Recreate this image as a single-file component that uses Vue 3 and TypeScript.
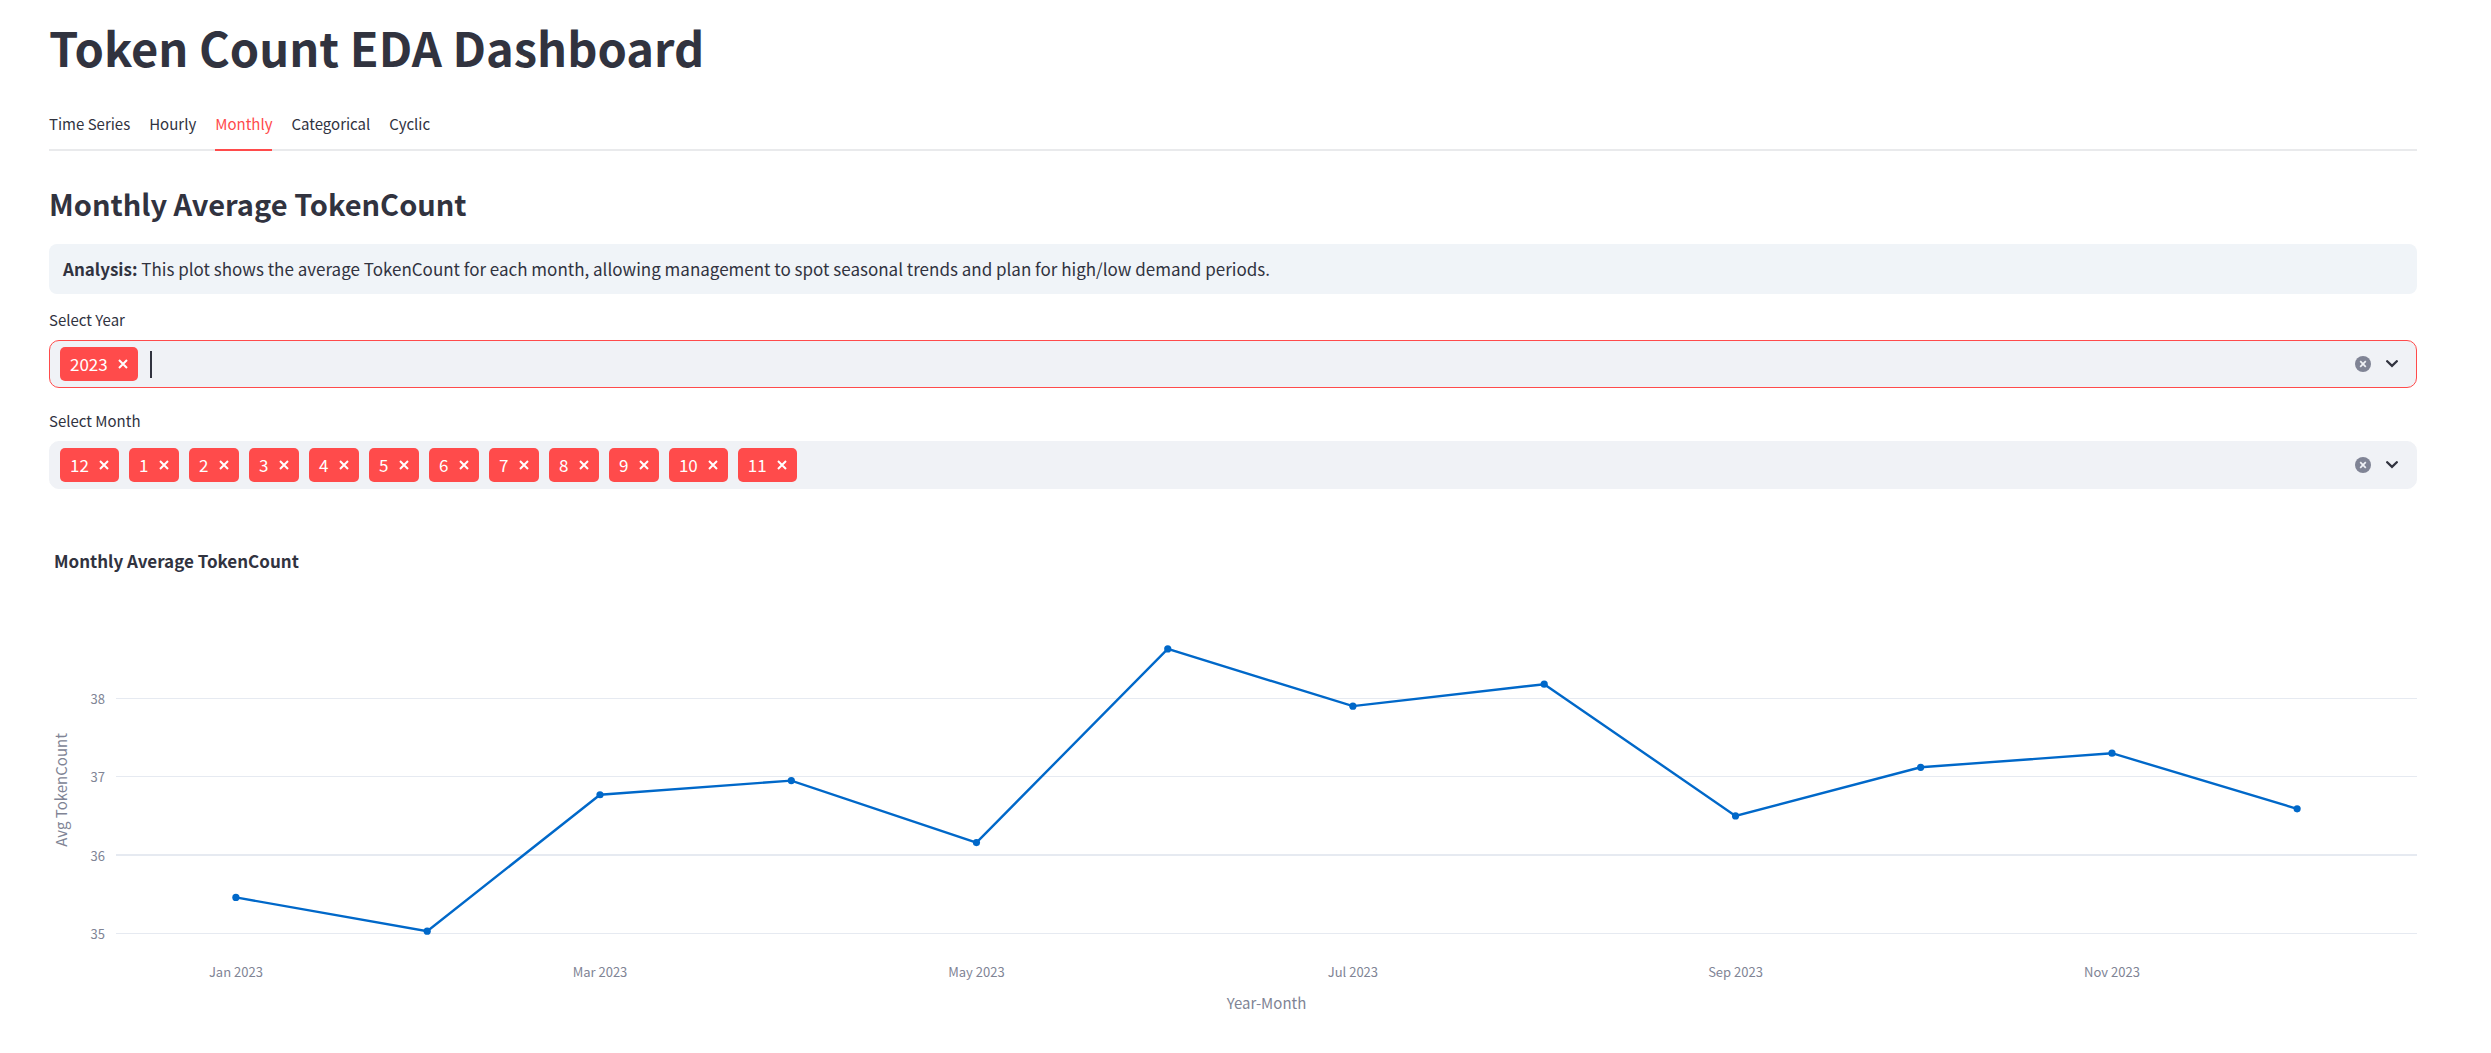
<script setup lang="ts">
import { computed, onBeforeUnmount, onMounted, ref } from 'vue'

interface Selector {
  id: string
  label: string
  focused: boolean
  values: string[]
}

const tabs = ['Time Series', 'Hourly', 'Monthly', 'Categorical', 'Cyclic']
const activeTab = ref('Monthly')

const selectors = ref<Selector[]>([
  { id: 'year', label: 'Select Year', focused: true, values: ['2023'] },
  {
    id: 'month',
    label: 'Select Month',
    focused: false,
    values: ['12', '1', '2', '3', '4', '5', '6', '7', '8', '9', '10', '11'],
  },
])

function removeValue(selector: Selector, value: string) {
  selector.values = selector.values.filter((v) => v !== value)
}

// Chart geometry, in pixels of the chart's own box
const chartHeight = 540
const plotLeft = 67
const valueStep = 78.4
const baseY = 423.5

const monthNames = ['Jan', 'Feb', 'Mar', 'Apr', 'May', 'Jun', 'Jul', 'Aug', 'Sep', 'Oct', 'Nov', 'Dec']
const averages = [35.46, 35.03, 36.77, 36.95, 36.16, 38.63, 37.9, 38.18, 36.5, 37.12, 37.3, 36.59]
const day = 86400000

const chartBox = ref<HTMLElement | null>(null)
const chartWidth = ref(2368)
let observer: ResizeObserver | undefined

onMounted(() => {
  if (!chartBox.value) return
  chartWidth.value = chartBox.value.clientWidth
  observer = new ResizeObserver(() => {
    if (chartBox.value) chartWidth.value = chartBox.value.clientWidth
  })
  observer.observe(chartBox.value)
})
onBeforeUnmount(() => observer?.disconnect())

const points = computed(() => {
  const plotWidth = chartWidth.value - plotLeft
  const inset = plotWidth * 0.0521
  const start = Date.UTC(2023, 0, 1)
  const span = (Date.UTC(2023, 11, 1) - start) / day
  return averages.map((value, i) => ({
    label: `${monthNames[i]} 2023`,
    x: plotLeft + inset + (((Date.UTC(2023, i, 1) - start) / day) * (plotWidth - 2 * inset)) / span,
    y: baseY - (value - 35) * valueStep,
  }))
})
const line = computed(() => points.value.map((p) => `${p.x},${p.y}`).join(' '))
const dateTicks = computed(() => points.value.filter((_, i) => i % 2 === 0))
const valueTicks = [38, 37, 36, 35].map((value) => ({
  value,
  y: Math.floor(baseY - (value - 35) * valueStep),
  emphasised: value === 36,
}))
</script>

<template>
  <main class="page">
    <h1>Token Count EDA Dashboard</h1>

    <div class="tabs" role="tablist">
      <button
        v-for="tab in tabs"
        :key="tab"
        type="button"
        role="tab"
        class="tab"
        :class="{ active: tab === activeTab }"
        :aria-selected="tab === activeTab"
        @click="activeTab = tab"
      >
        {{ tab }}
      </button>
    </div>

    <h2>Monthly Average TokenCount</h2>

    <p class="analysis">
      <strong>Analysis:</strong> This plot shows the average TokenCount for each month, allowing management to spot
      seasonal trends and plan for high/low demand periods.
    </p>

    <div v-for="selector in selectors" :key="selector.id" class="field">
      <label :for="selector.id">{{ selector.label }}</label>
      <div class="select" :class="{ focused: selector.focused }">
        <div class="values">
          <span v-for="value in selector.values" :key="value" class="tag">
            {{ value }}
            <button type="button" :aria-label="`Remove ${value}`" @click="removeValue(selector, value)">
              <svg width="10" height="10" viewBox="0 0 10 10" aria-hidden="true">
                <path d="M1 1l8 8M9 1l-8 8" stroke="currentColor" stroke-width="2" />
              </svg>
            </button>
          </span>
          <span v-if="selector.focused" class="caret"></span>
          <input :id="selector.id" type="text" autocomplete="off" />
        </div>
        <button type="button" class="clear" aria-label="Clear all" @click="selector.values = []">
          <svg width="16" height="16" viewBox="0 0 16 16" aria-hidden="true">
            <circle cx="8" cy="8" r="8" fill="#808495" />
            <path d="M5.2 5.2l5.6 5.6M10.8 5.2l-5.6 5.6" stroke="#f0f2f6" stroke-width="1.7" />
          </svg>
        </button>
        <button type="button" class="open" aria-label="Open">
          <svg width="12" height="8" viewBox="0 0 12 8" aria-hidden="true">
            <path
              d="M1.2 1.2L6 5.9l4.8-4.7"
              fill="none"
              stroke="#31333f"
              stroke-width="2.3"
              stroke-linecap="round"
            />
          </svg>
        </button>
      </div>
    </div>

    <div ref="chartBox" class="chart">
      <svg :width="chartWidth" :height="chartHeight" role="img" aria-label="Monthly Average TokenCount">
        <text class="chart-title" x="5" y="58">Monthly Average TokenCount</text>
        <g v-for="tick in valueTicks" :key="tick.value">
          <rect
            :x="plotLeft"
            :y="tick.emphasised ? tick.y - 1 : tick.y"
            :width="chartWidth - plotLeft"
            :height="tick.emphasised ? 2 : 1"
            fill="#e6eaf1"
          />
          <text class="tick" :x="plotLeft - 11" :y="tick.y + 6" text-anchor="end">{{ tick.value }}</text>
        </g>
        <polyline :points="line" fill="none" stroke="#0068c9" stroke-width="2.4" />
        <circle v-for="p in points" :key="p.label" :cx="p.x" :cy="p.y" r="3.6" fill="#0068c9" />
        <text v-for="tick in dateTicks" :key="tick.label" class="tick" :x="tick.x" y="467" text-anchor="middle">
          {{ tick.label }}
        </text>
        <text class="axis" :x="(plotLeft + chartWidth) / 2" y="499" text-anchor="middle">Year-Month</text>
        <text class="axis" transform="translate(18 280) rotate(-90)" text-anchor="middle">Avg TokenCount</text>
      </svg>
    </div>
  </main>
</template>

<style>
body {
  background: #ffffff;
}
</style>

<style scoped>
.page {
  box-sizing: border-box;
  padding: 18px 74px 0 49px;
  color: #31333f;
  font-family: 'Noto Sans CJK SC', 'Noto Sans', sans-serif;
  font-size: 17px;
  line-height: 26px;
}

h1,
h2,
p {
  margin: 0;
}

h1 {
  font-size: 47px;
  line-height: 58px;
  font-weight: 700;
}

button {
  display: flex;
  align-items: center;
  padding: 0;
  border: 0;
  background: none;
  color: inherit;
  font: inherit;
  cursor: pointer;
}

.tabs {
  display: flex;
  gap: 19px;
  margin-top: 26px;
  box-shadow: inset 0 -2px #e9eaec;
}

.tab {
  box-sizing: border-box;
  height: 49px;
  padding-bottom: 3px;
  border-bottom: 2px solid transparent;
  font-size: 15px;
}

.tab.active {
  color: #ff4b4b;
  border-bottom-color: #ff4b4b;
}

h2 {
  margin-top: 32px;
  font-size: 29px;
  line-height: 40px;
  font-weight: 600;
}

.analysis {
  margin-top: 21px;
  padding: 12px 14px;
  border-radius: 8px;
  background: #f0f4f8;
}

.analysis strong {
  font-weight: 600;
}

.field {
  display: flex;
  flex-direction: column;
  gap: 9px;
  margin-top: 15px;
}

.field + .field {
  margin-top: 22px;
}

label {
  font-size: 15px;
  line-height: 22px;
}

.select {
  box-sizing: border-box;
  display: flex;
  align-items: center;
  min-height: 48px;
  padding: 6px 18px 6px 10px;
  border: 1px solid #f0f2f6;
  border-radius: 10px;
  background: #f0f2f6;
}

.select.focused {
  border-color: #ff4b4b;
}

.values {
  display: flex;
  flex: 1;
  flex-wrap: wrap;
  align-items: center;
  gap: 10px;
}

.tag {
  box-sizing: border-box;
  display: flex;
  align-items: center;
  justify-content: space-between;
  gap: 10px;
  min-width: 50px;
  height: 34px;
  padding: 0 10px;
  border-radius: 5px;
  background: #ff4b4b;
  color: #ffffff;
}

.caret {
  width: 2px;
  height: 27px;
  margin-left: 2px;
  background: #31333f;
}

input {
  flex: 1;
  min-width: 20px;
  padding: 0;
  border: 0;
  outline: 0;
  background: none;
  color: inherit;
  font: inherit;
}

.open {
  margin-left: 15px;
}

.chart {
  margin-top: 21px;
  overflow: hidden;
}

.chart svg {
  display: block;
}

.chart-title {
  fill: #31333f;
  font-size: 17px;
  font-weight: 700;
}

.tick {
  fill: #808495;
  font-size: 13px;
}

.axis {
  fill: #808495;
  font-size: 15px;
}
</style>
